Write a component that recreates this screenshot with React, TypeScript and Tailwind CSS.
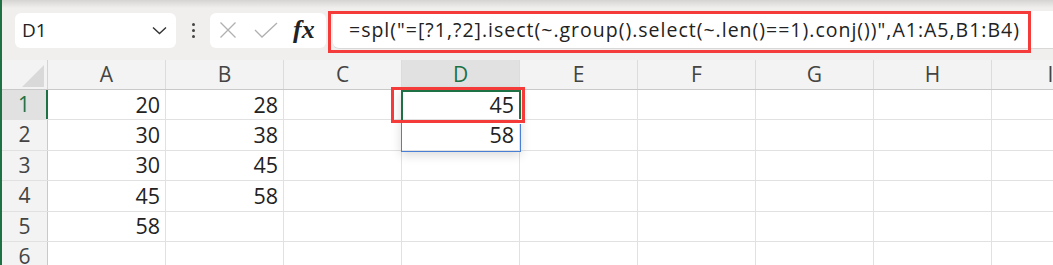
import React from 'react';

const cols = ['A', 'B', 'C', 'D', 'E', 'F', 'G', 'H', 'I'];

const data: Record<string, string> = {
  A1: '20', B1: '28', D1: '45',
  A2: '30', B2: '38', D2: '58',
  A3: '30', B3: '45',
  A4: '45', B4: '58',
  A5: '58',
};

const formula = '=spl("=[?1,?2].isect(~.group().select(~.len()==1).conj())",A1:A5,B1:B4)';

export default function App() {
  return (
    <div
      className="relative w-[1053px] h-[265px] overflow-hidden bg-white border-l-2 border-[#1e7145]"
      style={{ fontFamily: '"Open Sans", "Noto Sans", sans-serif' }}
    >
      {/* Formula bar */}
      <div className="relative h-[60px] bg-[#f1efee] flex items-center">
        <div className="absolute top-0 left-0 right-0 h-[8px] bg-gradient-to-b from-[#d6d4d3] to-[#f1efee]" />
        <div className="relative ml-[13px] w-[161px] h-[35px] rounded-[6px] bg-white flex items-center justify-between pl-[7px] pr-[9px]">
          <span className="text-[19px] text-[#222]">D1</span>
          <svg width="15" height="9" viewBox="0 0 15 9" fill="none">
            <path d="M1 1.5 L7.5 7.5 L14 1.5" stroke="#333" strokeWidth="1.4" />
          </svg>
        </div>
        <div className="w-[34px] flex flex-col items-center gap-[3px]">
          <span className="w-[3px] h-[3px] rounded-full bg-[#444]" />
          <span className="w-[3px] h-[3px] rounded-full bg-[#444]" />
          <span className="w-[3px] h-[3px] rounded-full bg-[#444]" />
        </div>
        <div className="relative w-[116px] h-[35px] rounded-[6px] bg-white flex items-center pl-[9px]">
          <svg width="18" height="18" viewBox="0 0 18 18" fill="none">
            <path d="M1.5 1.5 L16.5 16.5 M16.5 1.5 L1.5 16.5" stroke="#b0b0b0" strokeWidth="1.3" />
          </svg>
          <svg className="ml-[17px]" width="24" height="16" viewBox="0 0 24 16" fill="none">
            <path d="M1 8 L8 15 L23 1" stroke="#b0b0b0" strokeWidth="1.3" />
          </svg>
          <span
            className="ml-[15px] text-[26px] italic font-bold text-[#222] leading-none"
            style={{ fontFamily: '"Liberation Serif", serif' }}
          >
            fx
          </span>
        </div>
        <div className="relative ml-[7px] flex-1 h-[38px] rounded-l-[6px] bg-white flex items-center pl-[16px] border-b border-[#d8d8d8]">
          <span className="text-[19.5px] tracking-[1px] text-[#222] whitespace-nowrap">{formula}</span>
        </div>
        {/* annotation box */}
        <div className="absolute left-[326px] top-[11px] w-[703px] h-[42px] border-[3px] border-[#f53a3a]" />
      </div>

      {/* Column headers */}
      <div className="flex h-[30px] bg-[#f3f3f3] border-b border-[#c9c9c9]">
        <div className="w-[46px] shrink-0 relative border-r border-[#d4d4d4]">
          <div
            className="absolute left-[20px] top-[5px] w-[22px] h-[22px] bg-[#d9d9d9]"
            style={{ clipPath: 'polygon(100% 0, 100% 100%, 0 100%)' }}
          />
        </div>
        {cols.map((c) => (
          <div
            key={c}
            className={`w-[118px] shrink-0 flex items-center justify-center text-[21px] border-r border-[#dcdcdc] ${
              c === 'D' ? 'bg-[#e1e1e1] text-[#1e7145]' : 'text-[#444]'
            }`}
          >
            {c}
          </div>
        ))}
      </div>

      {/* Rows */}
      {[1, 2, 3, 4, 5, 6].map((r) => (
        <div key={r} className="flex h-[30.4px] border-b border-[#e1e1e1]">
          <div
            className={`w-[46px] shrink-0 flex items-center justify-center text-[21px] ${
              r === 1
                ? 'bg-[#e1e1e1] text-[#1e7145] border-r-2 border-[#1e7145]'
                : 'bg-[#f3f3f3] text-[#444] border-r border-[#c9c9c9]'
            }`}
          >
            {r}
          </div>
          {cols.map((c) => (
            <div
              key={c}
              className="w-[118px] shrink-0 flex items-center justify-end pr-[5px] text-[21.5px] text-[#222] border-r border-[#e1e1e1]"
            >
              {data[`${c}${r}`]}
            </div>
          ))}
        </div>
      ))}

      {/* Spill range & selection */}
      <div className="absolute left-[399px] top-[90px] w-[120px] h-[62px] border border-[#4a7fd6] shadow-[0_3px_10px_rgba(0,0,0,0.15)]" />
      <div className="absolute left-[399px] top-[90px] w-[120px] h-[32px] border-2 border-[#1e7145]" />
      <div className="absolute left-[516px] top-[119px] w-[5px] h-[5px] bg-[#1e7145] border border-white" />
      {/* annotation box */}
      <div className="absolute left-[389px] top-[87px] w-[134px] h-[36px] border-[3px] border-[#f53a3a]" />
    </div>
  );
}
